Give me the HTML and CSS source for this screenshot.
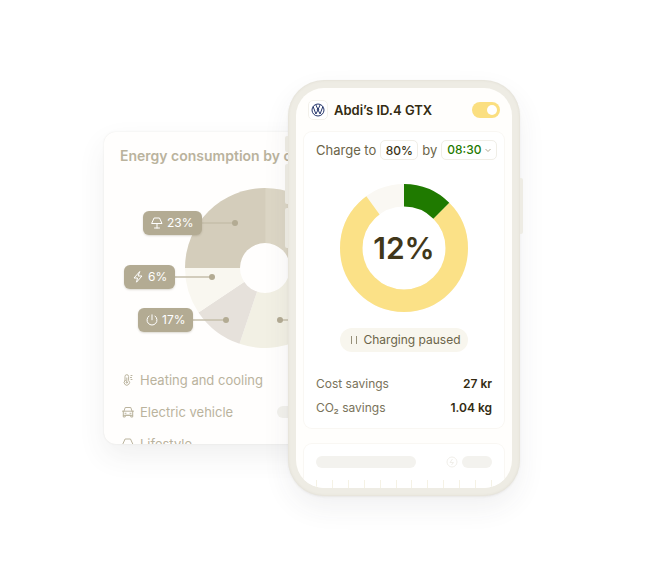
FILE: index.html
```html
<!DOCTYPE html>
<html lang="en">
<head>
<meta charset="utf-8">
<meta name="viewport" content="width=device-width, initial-scale=1">
<title>Abdi’s ID.4 GTX</title>
<link rel="stylesheet" href="styles.css">
</head>
<body>
<main class="scene">
  <section class="usage">
    <h2 class="usage-title">Energy consumption by category</h2>
    <div class="pie">
      <svg class="pie-chart" viewBox="0 0 288 160" aria-hidden="true">
        <path fill="#dcd6c5" d="M145 80V0A80 80 0 0 1 225 80Z"/>
        <path fill="#d4cdbb" d="M145.500 80H65A80 80 0 0 1 145.500 0Z"/>
        <path fill="#f2f0e4" d="M145 80H225A80 80 0 0 1 119.500 155.800Z"/>
        <path fill="#e6e1db" d="M145 80L119.500 155.800A80 80 0 0 1 78.500 124.500Z"/>
        <path fill="#f9f7f0" d="M145 80L78.500 124.500A80 80 0 0 1 65 80Z"/>
        <circle cx="145" cy="80" r="25" fill="#fffefd"/>
        <path fill="none" stroke="#c5bfab" stroke-width="1.500" d="M78 35h37M52 89h40M70 132h36M160 132h60"/>
        <g fill="#b3ab93"><circle cx="115" cy="35" r="3"/><circle cx="92" cy="89" r="3"/><circle cx="106" cy="132" r="3"/><circle cx="160" cy="132" r="3"/></g>
      </svg>
      <span class="chip chip-lamp">
        <svg class="icon" viewBox="0 0 12 12"><path d="M3.500 1h5L11 6.500H1ZM6 6.500v4.500M3.500 11h5"/></svg>23%</span>
      <span class="chip chip-bolt">
        <svg class="icon" viewBox="0 0 12 12"><path d="M7.500 .8L2 7h3.500L4.500 11.200 10 5H6.500Z"/></svg>6%</span>
      <span class="chip chip-power">
        <svg class="icon" viewBox="0 0 12 12"><path d="M3 2A5 5 0 1 0 9 2M6 .8v5"/></svg>17%</span>
    </div>
    <ul class="legend">
      <li><svg class="icon" viewBox="0 0 12 12"><path d="M3 6.500V2.500a1.800 1.800 0 0 1 3.600 0v4a2.700 2.700 0 1 1-3.600 0ZM4.800 4v4M9 1.500h1M8.500 3.500h1M9 5.500h1"/><circle cx="4.800" cy="8.500" r=".7"/></svg>Heating and cooling</li>
      <li><svg class="icon" viewBox="0 0 12 12"><path d="M2 5.200L3.200 1.500h5.600L10 5.200M.5 5.200h11M1.300 5.200v5.800h1.900V9.300h5.600V11h1.900V5.200M1.300 9.300h9.400M3 7.300h1M8 7.300h1"/></svg>Electric vehicle<span class="bar"></span></li>
      <li><svg class="icon" viewBox="0 0 12 12"><path d="M3.500 1h5L11 6.500H1ZM6 6.500v4.500M3.500 11h5"/></svg>Lifestyle</li>
    </ul>
  </section>

  <section class="phone">
    <i class="key key-mute"></i><i class="key key-up"></i><i class="key key-down"></i><i class="key key-power"></i>
    <div class="screen">
      <header class="bar-top">
        <span class="brand"><svg viewBox="0 0 14 14" aria-hidden="true"><circle cx="7" cy="7" r="6"/><path d="M2.200 3.700L4.900 11 7 6.900 9.100 11 11.800 3.700M4.800 1.800L7 6.500 9.200 1.800M5.800 6.700h2.400"/></svg></span>
        <h1 class="car">Abdi’s ID.4 GTX</h1>
        <input class="toggle" type="checkbox" role="switch" aria-label="Smart charging" checked>
      </header>
      <div class="panel">
        <form class="plan">
          <label for="level">Charge to</label>
          <input class="field level" id="level" type="text" value="80%">
          <label for="time">by</label>
          <span class="time-box">
            <select class="field time" id="time"><option>08:30</option></select>
            <svg class="caret" viewBox="0 0 8 8" aria-hidden="true"><path d="M1.500 3L4 5.500 6.500 3"/></svg>
          </span>
        </form>
        <div class="ring">
          <svg viewBox="0 0 128 128" aria-hidden="true">
            <g fill="none" stroke-width="22.500">
              <circle cx="64" cy="64" r="52.750" stroke="#faf8f3"/>
              <circle cx="64" cy="64" r="52.750" stroke="#fbe187" pathLength="1000" stroke-dasharray="775 225" transform="rotate(-45 64 64)"/>
              <circle cx="64" cy="64" r="52.750" stroke="#1f7a00" pathLength="1000" stroke-dasharray="125 875" transform="rotate(-90 64 64)"/>
            </g>
          </svg>
          <strong class="percent">12%</strong>
        </div>
        <p class="status"><svg viewBox="0 0 12 12" aria-hidden="true"><path d="M3.500 2v8M8.500 2v8"/></svg>Charging paused</p>
        <dl class="savings">
          <div><dt>Cost savings</dt><dd>27 kr</dd></div>
          <div><dt>CO₂ savings</dt><dd>1.04 kg</dd></div>
        </dl>
      </div>
      <div class="panel loading">
        <div class="loading-row">
          <span class="bone bone-long"></span>
          <svg viewBox="0 0 12 12" aria-hidden="true"><circle cx="6" cy="6" r="5"/><path d="M6.500 3L4 6.500h3.500L5.500 9"/></svg>
          <span class="bone bone-short"></span>
        </div>
        <div class="ticks"><i></i><i></i><i></i><i></i><i></i><i></i><i></i><i></i><i></i><i></i><i></i><i></i></div>
      </div>
    </div>
  </section>
</main>
</body>
</html>
```
FILE: styles.css
```css
* { box-sizing: border-box; }

body {
  margin: 0;
  min-height: 100vh;
  display: flex;
  align-items: center;
  justify-content: center;
  background: #fff;
  color: #6b6448;
  font: 13px/16px Inter, "Liberation Sans", sans-serif;
}

h1, h2, p, ul, dl, dd { margin: 0; padding: 0; }

.scene {
  display: flex;
  align-items: center;
  padding-right: 40px;
}

/* Household consumption card, partly behind the phone */
.usage {
  flex: 0 0 320px;
  height: 312px;
  padding: 16px;
  overflow: hidden;
  border-radius: 12px;
  background: #fffefd;
  color: #bab39d;
  box-shadow: 0 0 2px rgba(60, 50, 20, .1), 0 12px 28px rgba(60, 60, 70, .08);
}

.usage-title {
  font-size: 14px;
  line-height: 16px;
  font-weight: 600;
  white-space: nowrap;
}

.pie { position: relative; margin-top: 24px; }
.pie-chart { display: block; width: 100%; }

.chip {
  position: absolute;
  display: flex;
  align-items: center;
  gap: 4px;
  height: 24px;
  padding: 0 8px;
  border-radius: 6px;
  background: #b3ab93;
  color: #fff;
  font-size: 12px;
  box-shadow: 0 1px 2px rgba(80, 70, 40, .2);
}
.chip-lamp { left: 23px; top: 23px; }
.chip-bolt { left: 4px; top: 77px; }
.chip-power { left: 18px; top: 120px; }

.icon {
  flex: none;
  width: 12px;
  height: 12px;
  fill: none;
  stroke: currentColor;
  stroke-width: 1;
  stroke-linejoin: round;
  stroke-linecap: round;
}

.legend { margin-top: 24px; display: grid; gap: 16px; list-style: none; }
.legend li { display: flex; align-items: center; gap: 6px; padding-left: 2px; }
.bar { width: 131px; height: 12px; margin-left: auto; border-radius: 6px; background: #f2f1ec; }

/* Phone */
.phone {
  position: relative;
  flex: 0 0 232px;
  min-width: 0;
  height: 416px;
  margin-left: -136px;
  padding: 8px;
  border-radius: 36px;
  background: #eeece4;
  box-shadow: inset 0 0 3px rgba(90, 80, 50, .1), 0 1px 2px rgba(90, 80, 50, .08), 0 12px 28px rgba(60, 60, 70, .07);
}

.key { position: absolute; left: -3px; width: 3px; border-radius: 2px 0 0 2px; background: #e9e7df; }
.key-mute { top: 56px; height: 16px; }
.key-up { top: 84px; height: 40px; }
.key-down { top: 128px; height: 40px; }
.key-power { left: auto; right: -3px; top: 98px; height: 56px; border-radius: 0 2px 2px 0; background: #eeece4; }

.screen {
  height: 100%;
  padding: 0 8px;
  overflow: hidden;
  border-radius: 28px;
  background: #fffefc;
}

.bar-top { display: flex; align-items: center; gap: 6px; height: 44px; padding: 0 4px; }

.brand {
  display: grid;
  place-items: center;
  width: 20px;
  height: 20px;
  border: 1px solid #f3f1eb;
  border-radius: 5px;
  background: #fff;
}
.brand svg { width: 14px; height: 14px; fill: none; stroke: #25356a; stroke-width: 1; }

.car { flex: 1; color: #332b12; font-size: 13px; line-height: 16px; font-weight: 600; white-space: nowrap; }

.toggle {
  appearance: none;
  display: flex;
  justify-content: flex-end;
  width: 28px;
  height: 16px;
  margin: 0;
  padding: 3px;
  border-radius: 8px;
  background: #fbdf80;
}
.toggle::before { content: ""; width: 10px; height: 10px; border-radius: 50%; background: #fff; }
.toggle:not(:checked) { justify-content: flex-start; background: #e9e7df; }

.panel {
  padding: 8px 12px 12px;
  border-radius: 8px;
  background: #fff;
  box-shadow: 0 0 0 1px #f9f7f3;
}

.plan { display: flex; align-items: center; gap: 4px; margin-right: -4px; white-space: nowrap; }

.field {
  appearance: none;
  height: 20px;
  margin: 0;
  border: 1px solid #f0eee7;
  border-radius: 5px;
  background: #fff;
  font: 500 12px/16px Inter, "Liberation Sans", sans-serif;
}
.level { width: 38px; padding: 0; color: #3c3418; text-align: center; }
.time-box { position: relative; margin-left: auto; }
.time { display: block; width: 56px; padding: 0 0 0 5px; color: #1f7a00; }
.caret {
  position: absolute;
  right: 5px;
  top: 6px;
  width: 8px;
  height: 8px;
  fill: none;
  stroke: #b3ab93;
  pointer-events: none;
}

.ring { display: grid; place-items: center; margin: 24px 0 16px; }
.ring > * { grid-area: 1 / 1; }
.ring svg { width: 128px; height: 128px; }
.percent { color: #41371a; font-size: 30px; line-height: 32px; font-weight: 600; }

.status {
  display: flex;
  align-items: center;
  gap: 4px;
  width: fit-content;
  height: 24px;
  margin: 0 auto;
  padding: 0 8px;
  border-radius: 12px;
  background: #f8f6ee;
  font-size: 12px;
  white-space: nowrap;
}
.status svg { width: 12px; height: 12px; fill: none; stroke: #968f78; }

.savings { display: grid; gap: 8px; margin-top: 24px; font-size: 12px; }
.savings div { display: flex; justify-content: space-between; }
.savings dt { color: #79725a; }
.savings dd { color: #332b12; font-weight: 600; }

.loading { margin-top: 16px; padding-top: 12px; }
.loading-row { display: flex; align-items: center; gap: 4px; }
.loading-row svg { width: 12px; height: 12px; margin-left: auto; fill: none; stroke: #f0eee9; }
.bone { height: 12px; border-radius: 6px; background: #f3f2ee; }
.bone-long { width: 100px; }
.bone-short { width: 30px; }
.ticks { display: flex; justify-content: space-between; margin-top: 12px; }
.ticks i { width: 1px; height: 24px; background: #f5f2e5; }
```
